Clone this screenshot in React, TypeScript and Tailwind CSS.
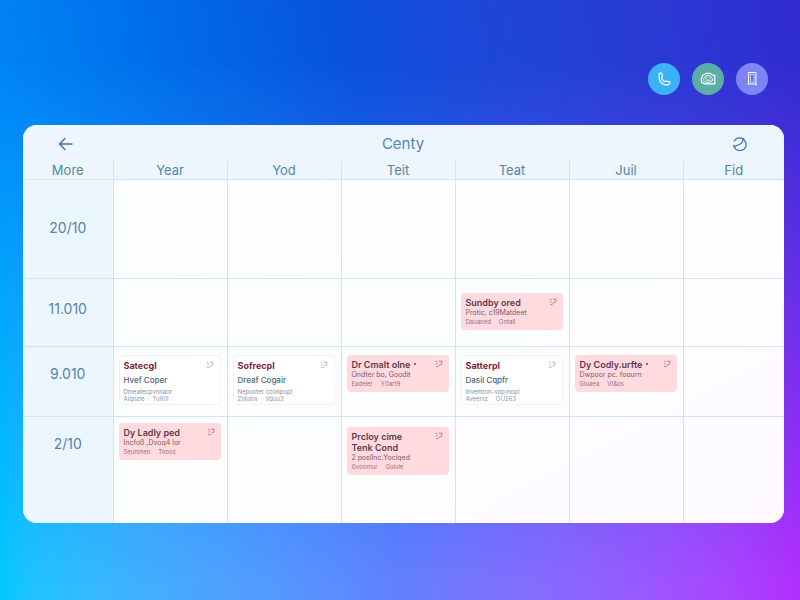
import React from "react";

type Event = {
  kind: "plain" | "alert";
  title: string;
  dot?: boolean;
  lead?: string;
  detail: string;
  place: string;
  time: string;
  offset: string;
};

type Row = { label: string; height: string; labelTop: string; events: (Event | null)[] };

const columns = ["Year", "Yod", "Teit", "Teat", "Juil", "Fid"];

const rows: Row[] = [
  { label: "20/10", height: "h-[99px]", labelTop: "pt-[38px]", events: [null, null, null, null, null, null] },
  {
    label: "11.010",
    height: "h-[68px]",
    labelTop: "pt-5",
    events: [
      null,
      null,
      null,
      { kind: "alert", title: "Sundby ored", detail: "Protic, c19Matdeet", place: "Dauaned", time: "Ootail", offset: "pt-3.5" },
      null,
      null,
    ],
  },
  {
    label: "9.010",
    height: "h-[70px]",
    labelTop: "pt-[17px]",
    events: [
      { kind: "plain", title: "Satecgl", lead: "Hvef Coper", detail: "Dmeatecpvnnaor", place: "Aiqozle", time: "Tu60l", offset: "pt-2" },
      { kind: "plain", title: "Sofrecpl", lead: "Dreaf Cogair", detail: "Nepuoter coonpupl", place: "Zolutra", time: "Vduu3", offset: "pt-2" },
      { kind: "alert", title: "Dr Cmalt olne", dot: true, detail: "Ondter bo, Goodit", place: "Eadeler", time: "Y0art9", offset: "pt-2" },
      { kind: "plain", title: "Satterpl", lead: "Dasil Cqpfr", detail: "Invemton-vop/nopl", place: "Aveeniz", time: "OU263", offset: "pt-2" },
      { kind: "alert", title: "Dy Codly.urfte", dot: true, detail: "Dwpoor pc. foourn", place: "Giuaea", time: "Vt&os", offset: "pt-2" },
      null,
    ],
  },
  {
    label: "2/10",
    height: "h-[107px]",
    labelTop: "pt-[17px]",
    events: [
      { kind: "alert", title: "Dy Ladly ped", detail: "Incfoß ,Dvoq4 lor", place: "Seunmen", time: "Tooos", offset: "pt-1.5" },
      null,
      { kind: "alert", title: "Prcloy cime", lead: "Tenk Cond", detail: "2 posllnc.Yociqed", place: "Gvoomur", time: "Gulvle", offset: "pt-2.5" },
      null,
      null,
      null,
    ],
  },
];

function Mark({ alert }: { alert: boolean }) {
  return (
    <svg viewBox="0 0 8 8" className={alert ? "mt-px size-2 shrink-0 text-[#a86f82]" : "mt-px size-2 shrink-0 text-[#a3a9b8]"} fill="none" stroke="currentColor" strokeWidth="0.8" aria-hidden="true">
      <path d="M0.600 1.400h1.800M4 1.200h3.200L6.400 4.400 4.400 4.800M2.600 2.800 1.400 4.600M1 6.600h2.200l.8-1.400" />
    </svg>
  );
}

function EventCard({ event }: { event: Event }) {
  const alert = event.kind === "alert";
  return (
    <article
      className={
        alert
          ? "rounded bg-[#ffdbe0] pt-1 pr-1.5 pb-1 pl-[5px]"
          : "rounded border border-[#eff3f9] bg-white pt-1 pr-1.5 pb-0.5 pl-1"
      }
    >
      <div className="flex items-start justify-between">
        <h3
          className={
            alert
              ? "flex items-center gap-1 text-[9px] leading-[11px] font-semibold whitespace-nowrap text-[#62374a]"
              : "text-[9px] leading-[11px] font-bold whitespace-nowrap text-[#7c2740]"
          }
        >
          {event.title}
          {event.dot && <span className="size-0.5 rounded-full bg-[#62374a]" />}
        </h3>
        <Mark alert={alert} />
      </div>
      {event.lead && (
        <p
          className={
            alert
              ? "text-[9px] leading-[11px] font-semibold text-[#62374a]"
              : "mt-1 text-[8px] leading-[11px] font-medium text-[#4a6878]"
          }
        >
          {event.lead}
        </p>
      )}
      <p
        className={
          alert
            ? "text-[7px] leading-[10px] whitespace-nowrap text-[#84566a]"
            : "mt-0.5 text-[6px] leading-[7px] whitespace-nowrap text-[#828d9c]"
        }
      >
        {event.detail}
      </p>
      <p
        className={
          alert
            ? "flex gap-2 text-[6px] leading-[8px] text-[#966c7d]"
            : "flex gap-2 text-[6px] leading-[7px] text-[#8d96a4]"
        }
      >
        <span>{event.place}</span>
        <span>{event.time}</span>
      </p>
    </article>
  );
}

const circle = "flex size-8 items-center justify-center rounded-full text-white";

export default function App() {
  return (
    <div className="relative isolate min-h-screen bg-linear-to-r from-[#00c8ff] via-[#6180ff] to-[#b22dff] pr-4 pl-[23px] font-['Inter','Liberation_Sans',sans-serif]">
      <div className="absolute inset-0 -z-10 bg-linear-80 from-[#0090fd] via-[#0a50dd] to-[#302bd0] [mask-image:linear-gradient(to_bottom,black_10%,transparent_97%)]" />
      <nav aria-label="Contact" className="flex justify-end gap-3 pt-[63px] pr-4">
        <button type="button" aria-label="Call" className={circle + " bg-[#3bb1f8]"}>
          <svg viewBox="0 0 16 16" className="size-4" fill="none" stroke="currentColor" strokeWidth="1.200" strokeLinejoin="round" aria-hidden="true">
            <path d="M3.200 2.600 5 1.800l1.200 1.200v3L5.400 7.400 8 10.600l2-.6 3.600.8.200 1.400-1.600 1.600H8.800L5.200 12 3.200 8.200Z" />
          </svg>
        </button>
        <button type="button" aria-label="Camera" className={circle + " bg-[#5dada7]"}>
          <svg viewBox="0 0 16 16" className="size-4" fill="none" stroke="currentColor" strokeWidth="1.200" strokeLinejoin="round" aria-hidden="true">
            <path d="M1.200 8 2.800 4.200 6 2.400h4.500l1.500 1.500 2.800.4v8.600H4L1.600 11Z" />
            <path d="M4.200 10.800C2.800 7.600 5 4.600 8 4.600s5 2.400 4.200 5.400l-1.600 1.200H4.800M5.600 7h1.400M9.200 7h1.400M5.800 9.800l1.600-1.200 1.400 1 1.800-.4" strokeWidth="0.900" />
          </svg>
        </button>
        <button type="button" aria-label="Device" className={circle + " bg-[#7d85f5]"}>
          <svg viewBox="0 0 16 16" className="size-4" fill="none" stroke="currentColor" strokeWidth="1" aria-hidden="true">
            <path d="M4.500 1.500h7.500v13M4.500 1.500v11.500M3.500 13h8.500" />
            <path d="M6.500 3.500h3.500v7.500H6.500Z" strokeWidth="0.600" fill="#6a70d8" />
          </svg>
        </button>
      </nav>

      <main className="mt-[30px] overflow-hidden rounded-[14px] bg-linear-to-br from-[#eff8ff] via-[#f6faff] to-[#f8ecff]">
        <header className="flex h-9 items-center justify-between bg-[#edf5fe] pt-0.5 pr-9 pl-[35px] text-[#3873b3]">
          <button type="button" aria-label="Back">
            <svg viewBox="0 0 16 16" className="size-4" fill="none" stroke="currentColor" strokeWidth="1.400" strokeLinecap="round" strokeLinejoin="round" aria-hidden="true">
              <path d="M7 2.500 1.500 8 7 13.500M1.500 8h12.500" />
            </svg>
          </button>
          <h1 className="text-[15px] leading-5 text-[#5287b5]">Centy</h1>
          <button type="button" aria-label="Refresh">
            <svg viewBox="0 0 16 16" className="size-4" fill="none" stroke="currentColor" strokeWidth="1.200" strokeLinecap="round" strokeLinejoin="round" aria-hidden="true">
              <path d="M2.400 5C3.600 2 7.600 1 10.600 2.800 11.800 6 8.600 8.400 5.800 9 4.400 9.400 3 10.400 2.400 11.600M11.400 2.400l1.200 2.400C15 7 14.800 10.800 12.200 13 9 15.400 4 14.800 2.400 11.600M1.800 9.200l.6 2.400" />
            </svg>
          </button>
        </header>
        <table className="w-full table-fixed border-collapse">
          <colgroup>
            <col className="w-[90px]" />
            <col />
            <col />
            <col />
            <col />
            <col />
            <col className="w-[101px]" />
          </colgroup>
          <thead>
            <tr className="h-[18px] bg-[#edf6fe] text-[13px] leading-[15px] text-[#5585ab]">
              <th scope="col" className="border-b border-[#cfe5f1] px-0 pt-0.5 pb-0 font-normal">More</th>
              {columns.map((name) => (
                <th key={name} scope="col" className="border-b border-l border-[#cfe5f1] px-0 pt-0.5 pb-0 font-normal">
                  {name}
                </th>
              ))}
            </tr>
          </thead>
          <tbody>
            {rows.map((row) => (
              <tr key={row.label} className={row.height + " border-b border-[#cfe5f1] align-top last:border-b-0"}>
                <th scope="row" className={row.labelTop + " bg-[#ecf6fe] px-0 pb-0 text-[14px] leading-5 font-normal text-[#5585ab]"}>
                  {row.label}
                </th>
                {row.events.map((event, i) => (
                  <td key={i} className={(event ? event.offset : "pt-0") + " border-l border-[#cfe5f1] bg-white/70 pr-1.5 pb-0 pl-[5px]"}>
                    {event && <EventCard event={event} />}
                  </td>
                ))}
              </tr>
            ))}
          </tbody>
        </table>
      </main>
    </div>
  );
}
